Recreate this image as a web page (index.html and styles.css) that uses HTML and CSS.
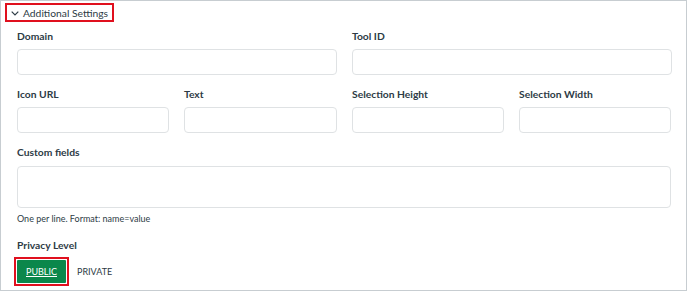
FILE: index.html
```html
<!DOCTYPE html>
<html>
<head>
<meta charset="utf-8">
<link rel="stylesheet" href="styles.css">
</head>
<body>
<div class="panel">
  <div class="toggle-row">
    <div class="toggle">
      <svg class="chev" width="8" height="5" viewBox="0 0 8 5"><path d="M0.7 0.7 L4 4 L7.3 0.7" fill="none" stroke="#2d3b45" stroke-width="1.2"/></svg>
      <span>Additional Settings</span>
    </div>
  </div>
  <div class="grid2 row1">
    <div class="field"><label class="lbl">Domain</label><div class="input"></div></div>
    <div class="field"><label class="lbl">Tool ID</label><div class="input"></div></div>
  </div>
  <div class="grid4 row2">
    <div class="field"><label class="lbl">Icon URL</label><div class="input"></div></div>
    <div class="field"><label class="lbl">Text</label><div class="input"></div></div>
    <div class="field"><label class="lbl">Selection Height</label><div class="input"></div></div>
    <div class="field"><label class="lbl">Selection Width</label><div class="input"></div></div>
  </div>
  <div class="field row3">
    <label class="lbl">Custom fields</label>
    <div class="textarea"></div>
    <div class="hint">One per line. Format: name=value</div>
  </div>
  <div class="privacy">
    <div class="lbl">Privacy Level</div>
    <div class="buttons">
      <div class="focus"><span class="btn-public">PUBLIC</span></div>
      <span class="btn-private">PRIVATE</span>
    </div>
  </div>
</div>
</body>
</html>
```

FILE: styles.css
```css
html, body { margin: 0; padding: 0; background: #fff; }
body { font-family: Lato, "Liberation Sans", sans-serif; color: #2d3b45; }
.panel {
  box-sizing: border-box;
  width: 687px;
  height: 291px;
  border: 1px solid #c7cdd1;
  padding: 0 15px 0 16px;
}
.toggle-row { display: flex; margin-top: 2px; margin-left: -12px; }
.toggle {
  box-sizing: border-box;
  height: 19px;
  border: 2px solid #e0101e;
  display: flex;
  align-items: center;
  padding: 0 4px 0 4px;
  font-size: 10.3px;
  gap: 4px;
}
.chev { display: block; margin-top: 1px; }
.field { display: flex; flex-direction: column; }
.lbl { font-size: 10.3px; font-weight: bold; line-height: 14px; }
.grid2 { display: grid; grid-template-columns: 320px 320px; column-gap: 15px; }
.grid4 { display: grid; grid-template-columns: 152px 153px 152px 152px; column-gap: 15px; }
.row1 { margin-top: 7px; }
.row1 .lbl { margin-bottom: 6px; }
.row2 { margin-top: 12px; }
.row2 .lbl { margin-bottom: 6px; }
.input {
  box-sizing: border-box;
  height: 26px;
  border: 1px solid #dfe2e4;
  border-radius: 4px;
  background: #fff;
}
.row3 { margin-top: 12px; }
.row3 .lbl { margin-bottom: 7px; }
.textarea {
  box-sizing: border-box;
  height: 42px;
  border: 1px solid #dfe2e4;
  border-radius: 4px;
}
.hint { font-size: 9px; line-height: 12px; margin-top: 5px; color: #2d3b45; }
.privacy { margin-top: 13px; }
.privacy .lbl { margin-bottom: 5px; }
.buttons { display: flex; align-items: center; margin-left: -3px; }
.focus {
  border: 2px solid #e0101e;
  padding: 1px;
  display: flex;
}
.btn-public {
  background: #0b874b;
  color: #fff;
  font-size: 9px;
  text-decoration: underline;
  height: 23px;
  line-height: 23px;
  padding: 0 9px;
  border-radius: 1px;
}
.btn-private {
  font-size: 9px;
  margin-left: 8px;
  color: #2d3b45;
}
```
